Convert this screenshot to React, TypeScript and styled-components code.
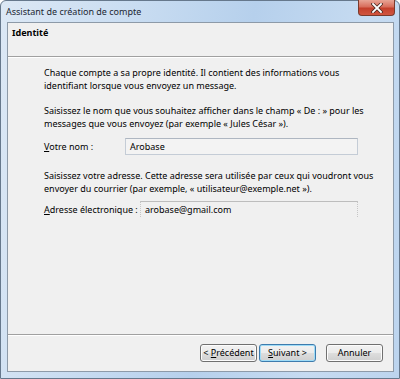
import React from 'react';
import styled, { createGlobalStyle } from 'styled-components';

const GlobalStyle = createGlobalStyle`
  html, body {
    margin: 0;
    padding: 0;
    background: #ffffff;
  }
  body {
    font-family: "Noto Sans", "Open Sans", sans-serif;
    font-size: 9px;
    color: #000;
  }
`;

const Window = styled.div`
  box-sizing: border-box;
  width: 400px;
  height: 379px;
  display: flex;
  flex-direction: column;
  border: 1px solid #66788c;
  border-radius: 6px 6px 0 0;
  background: linear-gradient(100deg, #dce8f5 0%, #c8dcf1 30%, #b6d0ec 55%, #c6dbf1 80%, #bcd4ee 100%);
  padding: 0 5px 6px 6px;
`;

const TitleBar = styled.div`
  height: 21px;
  display: flex;
  align-items: flex-start;
  justify-content: space-between;
`;

const Title = styled.span`
  margin: 4px 0 0 -1px;
  font-size: 9px;
  color: #1c2733;
`;

const CloseButton = styled.div`
  box-sizing: border-box;
  width: 37px;
  height: 16px;
  margin-top: -1px;
  margin-right: -1px;
  display: flex;
  align-items: center;
  justify-content: center;
  border: 1px solid #7a3a2c;
  border-top: none;
  border-radius: 0 0 4px 4px;
  background: linear-gradient(#e8a596 0%, #d86e5c 45%, #c4402c 55%, #d0553f 100%);
`;

const Client = styled.div`
  flex: 1;
  display: flex;
  flex-direction: column;
  background: #f0f0f0;
  border: 1px solid #8d9aa8;
`;

const Header = styled.div`
  height: 34px;
  padding: 3px 0 0 4px;
  box-sizing: border-box;
  font-weight: bold;
  border-bottom: 1px solid #a0a0a0;
  box-shadow: 0 1px 0 #ffffff;
`;

const Body = styled.div`
  flex: 1;
  padding: 9px 0 0 36px;
  display: flex;
  flex-direction: column;
`;

const Paragraph = styled.p<{ $top: number }>`
  margin: ${(p) => p.$top}px 0 0 0;
  white-space: nowrap;
  line-height: 13px;
`;

const FieldRow = styled.div<{ $top: number }>`
  display: flex;
  align-items: center;
  margin-top: ${(p) => p.$top}px;
`;

const Label = styled.span<{ $width: number }>`
  width: ${(p) => p.$width}px;
  flex: none;
`;

const Key = styled.span`
  text-decoration: underline;
`;

const Input = styled.div`
  box-sizing: border-box;
  width: 233px;
  height: 17px;
  padding: 0 4px;
  display: flex;
  align-items: center;
  border: 1px solid #c4ccd6;
  border-top-color: #aeb6c1;
  background: #f3f3f3;
`;

const ReadOnly = styled.div`
  box-sizing: border-box;
  width: 218px;
  height: 16px;
  padding: 0 4px;
  display: flex;
  align-items: center;
  border-top: 1px solid #bdbdbd;
  border-left: 1px dotted #c6c6c6;
  border-right: 1px dotted #c6c6c6;
`;

const Footer = styled.div`
  height: 37px;
  box-sizing: border-box;
  border-top: 1px solid #a0a0a0;
  box-shadow: inset 0 1px 0 #ffffff;
  display: flex;
  align-items: center;
  justify-content: flex-end;
  padding: 0 10px 1px 0;
`;

const Button = styled.button<{ $focused?: boolean; $gap?: number }>`
  box-sizing: border-box;
  width: 57px;
  height: 18px;
  margin-left: ${(p) => p.$gap ?? 0}px;
  padding: 0;
  font-family: inherit;
  font-size: 9px;
  color: #000;
  border: 1px solid ${(p) => (p.$focused ? '#3d7bad' : '#707070')};
  border-radius: 3px;
  background: linear-gradient(#f2f2f2 0%, #ebebeb 48%, #dddddd 52%, #cfcfcf 100%);
  box-shadow: inset 0 0 0 1px ${(p) => (p.$focused ? '#9fdcf7' : '#fcfcfc')};
`;

export default function App() {
  return (
    <>
      <GlobalStyle />
      <Window>
        <TitleBar>
          <Title>Assistant de création de compte</Title>
          <CloseButton>
            <svg width="12" height="10" viewBox="0 0 12 10">
              <path d="M2 1 L10 9 M10 1 L2 9" stroke="#4a2a22" strokeWidth="3.4" strokeLinecap="square" />
              <path d="M2 1 L10 9 M10 1 L2 9" stroke="#ffffff" strokeWidth="1.8" strokeLinecap="square" />
            </svg>
          </CloseButton>
        </TitleBar>
        <Client>
          <Header>Identité</Header>
          <Body>
            <Paragraph $top={0}>
              Chaque compte a sa propre identité. Il contient des informations vous
              <br />
              identifiant lorsque vous envoyez un message.
            </Paragraph>
            <Paragraph $top={12}>
              Saisissez le nom que vous souhaitez afficher dans le champ « De : » pour les
              <br />
              messages que vous envoyez (par exemple « Jules César »).
            </Paragraph>
            <FieldRow $top={8}>
              <Label $width={81}>
                <Key>V</Key>otre nom :
              </Label>
              <Input>Arobase</Input>
            </FieldRow>
            <Paragraph $top={14}>
              Saisissez votre adresse. Cette adresse sera utilisée par ceux qui voudront vous
              <br />
              envoyer du courrier (par exemple, « utilisateur@exemple.net »).
            </Paragraph>
            <FieldRow $top={6}>
              <Label $width={96}>
                <Key>A</Key>dresse électronique :
              </Label>
              <ReadOnly>arobase@gmail.com</ReadOnly>
            </FieldRow>
          </Body>
          <Footer>
            <Button>
              &lt; <Key>P</Key>récédent
            </Button>
            <Button $focused $gap={2}>
              <Key>S</Key>uivant &gt;
            </Button>
            <Button $gap={10}>Annuler</Button>
          </Footer>
        </Client>
      </Window>
    </>
  );
}
